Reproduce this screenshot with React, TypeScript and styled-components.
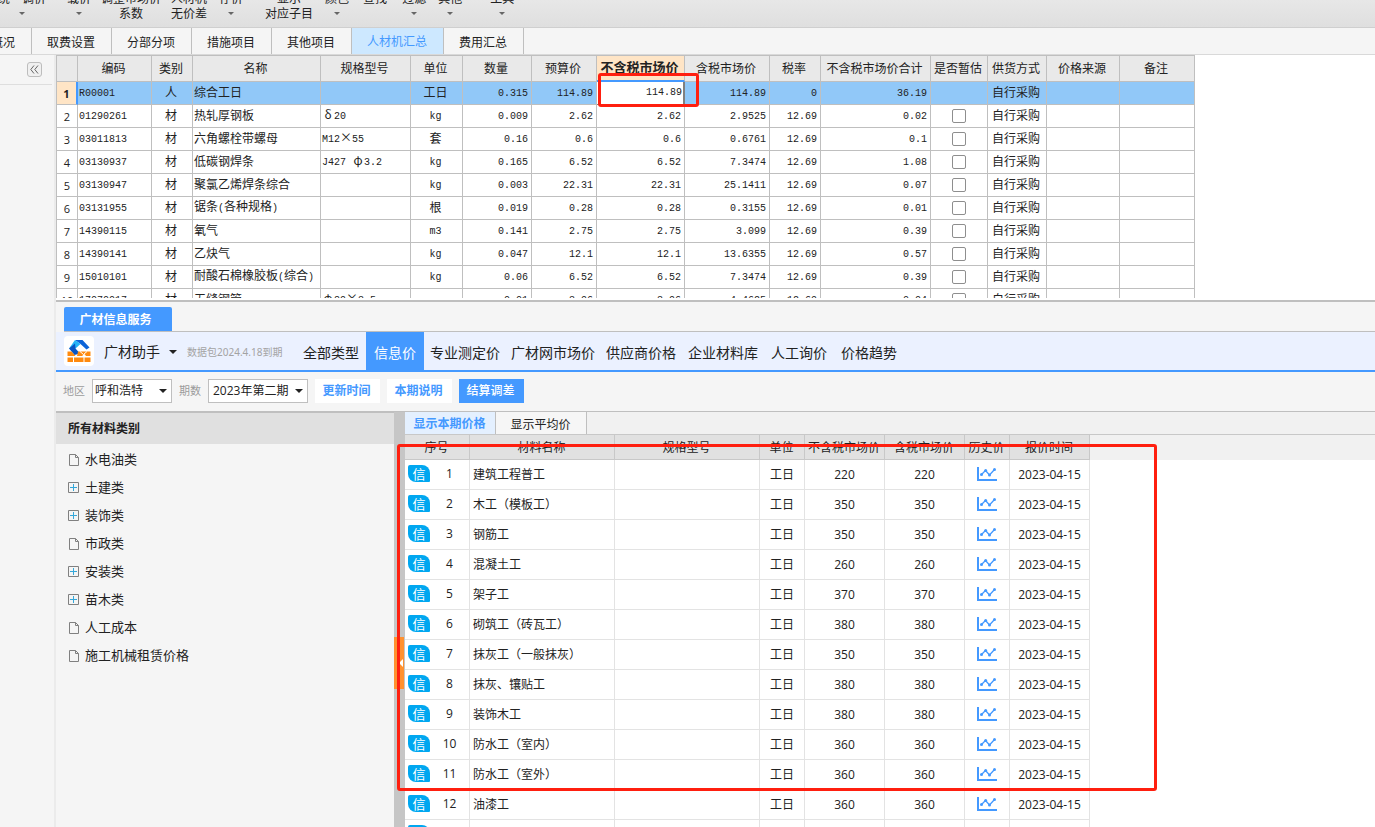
import React from 'react';
import styled, { createGlobalStyle, css } from 'styled-components';

const blue = '#4499ff';
const line = '#bfbfbf';
const sans = '"Open Sans", "Noto Sans CJK SC", sans-serif';

const GlobalStyle = createGlobalStyle`
  *, *::before, *::after { box-sizing: border-box; }
  body { margin: 0; background: #fff; color: #222; font: 12px/16px ${sans}; overflow: hidden; }
  button, input, select { font: inherit; color: inherit; }
  button { border: 0; padding: 0; background: none; cursor: pointer; white-space: nowrap; }
`;

const Page = styled.div`
  display: flex;
  flex-direction: column;
  height: 100vh;
  overflow: hidden;
`;

/* ---------- ribbon ---------- */
const Ribbon = styled.header`
  display: flex;
  align-items: flex-start;
  flex: none;
  height: 28px;
  overflow: hidden;
  background: linear-gradient(#e7e7e7, #dfdfdf);
  border-bottom: 1px solid #cfcfcf;
`;
const RibbonButton = styled.button<{ $gap: number }>`
  display: flex;
  flex: none;
  flex-direction: column;
  align-items: center;
  margin: -8px 0 0 ${p => p.$gap}px;
  line-height: 14px;
`;
const RibbonSub = styled.span`
  display: flex;
  align-items: center;
  justify-content: center;
  height: 15px;
`;
const Caret = styled.span<{ $size?: number; $color?: string }>`
  display: block;
  flex: none;
  border: ${p => p.$size ?? 3}px solid transparent;
  border-top-color: ${p => p.$color ?? '#666'};
  border-bottom: 0;
`;

/* ---------- page tabs ---------- */
const PageTabs = styled.nav`
  display: flex;
  flex: none;
  height: 27px;
  background: #f5f5f5;
  border-bottom: 1px solid #d9d9d9;
`;
const PageTab = styled.button<{ $active?: boolean; $width?: number; $cut?: boolean }>`
  display: flex;
  flex: none;
  align-items: center;
  justify-content: center;
  width: ${p => p.$width ?? 80}px;
  padding: 4px 1px 0 0;
  border-right: 1px solid ${line};
  ${p => p.$active && css`background: #cde8ff; color: ${blue}; padding-top: 2px;`}
  ${p => p.$cut && css`justify-content: flex-end; padding-right: 16px;`}
`;

const Main = styled.div`
  display: flex;
  flex: 1;
  min-height: 0;
`;
const Rail = styled.aside`
  flex: none;
  width: 56px;
  background: #f5f5f5;
  border-right: 2px solid #ebebeb;
`;
const RailHead = styled.div`
  display: flex;
  justify-content: flex-end;
  height: 30px;
  margin-right: 2px;
  padding: 7px 10px 0 0;
  border-bottom: 1px solid #dedede;
`;
const CollapseButton = styled.button`
  display: flex;
  align-items: center;
  justify-content: center;
  width: 15px;
  height: 15px;
  border: 1px solid #bdbdbd;
  border-radius: 3px;
  background: #f0f0f0;
`;
const Work = styled.main`
  display: flex;
  flex: 1;
  flex-direction: column;
  min-width: 0;
`;

/* ---------- summary grid ---------- */
const SummaryPane = styled.section`
  position: relative;
  flex: none;
  height: 247px;
  padding-bottom: 2px;
  border-bottom: 2px solid ${line};
  background: #fff;
`;
const SummaryScroll = styled.div`
  height: 243px;
  overflow: hidden;
`;
const SummaryTable = styled.table`
  width: 1139px;
  table-layout: fixed;
  border-collapse: separate;
  border-spacing: 0;
  border-top: 1px solid ${line};
  border-left: 1px solid ${line};
  font-family: "Noto Sans CJK SC", sans-serif;
`;
const HeadCell = styled.th<{ $active?: boolean }>`
  height: 26px;
  padding: 0 2px 2px 0;
  background: ${p => (p.$active ? '#ffe5c6' : '#e9e9e9')};
  border-right: 1px solid ${line};
  border-bottom: ${p => (p.$active ? `2px solid ${blue}` : `1px solid ${line}`)};
  font-weight: ${p => (p.$active ? 700 : 400)};
  font-size: ${p => (p.$active ? 13 : 12)}px;
  white-space: nowrap;
`;
type Align = 'left' | 'center' | 'right';
const Cell = styled.td<{ $align?: Align }>`
  height: 23px;
  padding: 0 3px 2px 1px;
  border-right: 1px solid ${line};
  border-bottom: 1px solid ${line};
  text-align: ${p => p.$align ?? 'center'};
  white-space: nowrap;
`;
const TickCell = styled(Cell)`
  padding: 0 1px;
`;
const RowNumber = styled.th<{ $active?: boolean }>`
  height: 23px;
  padding: 1px 0 0;
  border-right: 1px solid ${line};
  border-bottom: 1px solid ${line};
  font: 400 11px/16px ${sans};
  ${p => p.$active && css`background: #ffe5c6; border-right: 2px solid ${blue}; font-weight: 700;`}
`;
const SummaryRow = styled.tr<{ $active?: boolean }>`
  background: ${p => (p.$active ? '#91c8f8' : '#fff')};
`;
const EditCell = styled(Cell)`
  padding: 0;
  background: #fff;
  border-right: 2px solid #808080;
  border-bottom-color: #808080;
`;
const CellInput = styled.input`
  display: block;
  width: 100%;
  height: 22px;
  padding: 0 1px 2px 0;
  border: 0;
  outline: 0;
  background: transparent;
  text-align: right;
  font: 10px/16px "Liberation Mono", monospace;
`;
const Mono = styled.span`
  font: 10px/16px "Liberation Mono", monospace;
  white-space: pre;
`;
const Wide = styled.span`
  display: inline-block;
  width: 12px;
  text-align: center;
`;
const Tick = styled.input`
  display: block;
  width: 14px;
  height: 14px;
  margin: 0 auto;
  appearance: none;
  border: 1px solid #8e8e8e;
  border-radius: 2px;
  background: #fff;
`;
const Mark = styled.div<{ $x: number; $y: number; $w: number; $h: number }>`
  position: absolute;
  left: ${p => p.$x}px;
  top: ${p => p.$y}px;
  width: ${p => p.$w}px;
  height: ${p => p.$h}px;
  border: 3px solid #ff1f0f;
  border-radius: 3px;
  pointer-events: none;
`;

/* ---------- price service ---------- */
const Service = styled.section`
  display: flex;
  flex: 1;
  flex-direction: column;
  min-height: 0;
  background: #f5f5f5;
`;
const ServiceTabs = styled.div`
  display: flex;
  flex: none;
  align-items: flex-end;
  height: 30px;
  margin-left: 8px;
  border-bottom: 1px solid ${line};
`;
const ServiceTab = styled.button`
  width: 108px;
  height: 24px;
  padding: 2px 5px 0 0;
  border-radius: 2px 2px 0 0;
  background: ${blue};
  color: #fff;
  font-weight: 700;
`;
const MenuBar = styled.div`
  display: flex;
  flex: none;
  align-items: center;
  height: 40px;
  padding-left: 8px;
  background: #ebf1ff;
  border-bottom: 2px solid ${blue};
  font-size: 14px;
  line-height: 20px;
`;
const LogoBox = styled.div`
  width: 30px;
  height: 30px;
  border-radius: 4px;
  background: #fff;
  & > svg { display: block; }
`;
const Brand = styled.button`
  display: flex;
  align-items: center;
  gap: 9px;
  margin-left: 10px;
  padding-top: 2px;
`;
const Expiry = styled.span`
  width: 98px;
  margin: 0 18px 0 10px;
  padding-top: 1px;
  color: #a3a3a3;
  font: 10px/16px "Noto Sans", "Noto Sans CJK SC", sans-serif;
  white-space: nowrap;
`;
const MenuItem = styled.button<{ $gap: number; $active?: boolean }>`
  align-self: stretch;
  margin-left: ${p => p.$gap}px;
  padding-top: 4px;
  ${p => p.$active && css`padding: 4px 8px 0; background: ${blue}; color: #fff;`}
`;
const Filters = styled.div`
  display: flex;
  flex: none;
  align-items: center;
  gap: 7px;
  height: 39px;
  padding: 0 0 2px 7px;
`;
const FilterLabel = styled.label`
  display: flex;
  align-items: center;
  gap: 7px;
  color: #9b9b9b;
  font-size: 11px;
`;
const SelectBox = styled.span<{ $width: number }>`
  display: grid;
  align-items: center;
  width: ${p => p.$width}px;
  color: #222;
  font-size: 12px;
  & > * { grid-area: 1 / 1; }
  & > span { justify-self: end; margin-right: 5px; pointer-events: none; }
`;
const Select = styled.select<{ $pad: number }>`
  width: 100%;
  height: 24px;
  padding: 0 0 0 ${p => p.$pad}px;
  appearance: none;
  border: 1px solid ${line};
  border-radius: 0;
  background: #fff;
`;
const Action = styled.button<{ $primary?: boolean }>`
  width: 65px;
  height: 24px;
  padding: 1px 2px 0 0;
  background: ${p => (p.$primary ? blue : '#fff')};
  color: ${p => (p.$primary ? '#fff' : blue)};
  font-weight: ${p => (p.$primary ? 500 : 700)};
`;
const Body = styled.div`
  position: relative;
  display: flex;
  flex: 1;
  min-height: 0;
  border-top: 1px solid ${line};
`;
const Sidebar = styled.aside`
  flex: none;
  width: 338px;
  border-top: 1px solid ${line};
`;
const SidebarTitle = styled.h2`
  margin: 0 0 1px;
  padding: 8px 12px 7px;
  background: #e0e0e0;
  font-size: 12px;
  line-height: 16px;
`;
const Tree = styled.ul`
  margin: 0;
  padding: 0;
  list-style: none;
`;
const TreeItem = styled.button`
  display: flex;
  align-items: center;
  gap: 5px;
  width: 100%;
  height: 28px;
  padding-left: 12px;
  font-size: 13px;
  & > svg { display: block; margin-top: 2px; }
`;
const Splitter = styled.div`
  flex: none;
  width: 11px;
  padding-top: 225px;
  background: #c6c6c6;
`;
const Handle = styled.button`
  display: flex;
  align-items: center;
  justify-content: flex-end;
  width: 10px;
  height: 52px;
  background: #ff912f;
`;
const Results = styled.div`
  flex: 1;
  min-width: 0;
  overflow: hidden;
  background: #fff;
`;
const SubTabs = styled.div`
  display: flex;
  height: 23px;
  background: #f1f1f1;
  border-bottom: 1px solid #c8c8c8;
`;
const SubTab = styled.button<{ $active?: boolean }>`
  width: 91px;
  padding-top: 4px;
  padding-right: 1px;
  border-right: 1px solid ${line};
  background: ${p => (p.$active ? '#e4f0ff' : '#f6f6f6')};
  ${p => p.$active && css`padding-top: 2px; color: ${blue}; font-weight: 700;`}
`;
const PriceWrap = styled.div`
  background: linear-gradient(#f1f1f1 25px, #fff 25px);
`;
const PriceTable = styled.table`
  width: 685px;
  table-layout: fixed;
  border-collapse: separate;
  border-spacing: 0;
`;
const PriceHead = styled.th`
  height: 25px;
  padding: 2px 1px 0 0;
  background: #e1e1e1;
  border-right: 1px solid #c8c8c8;
  border-bottom: 1px solid #c8c8c8;
  font-weight: 400;
  white-space: nowrap;
`;
const PriceCell = styled.td<{ $align?: Align }>`
  height: 30px;
  padding: 0 3px;
  border-right: 1px solid #e3e3e3;
  border-bottom: 1px solid #e3e3e3;
  text-align: ${p => p.$align ?? 'center'};
  white-space: nowrap;
`;
const IndexBox = styled.div`
  display: flex;
  align-items: center;
  padding-bottom: 2px;
`;
const IndexText = styled.span`
  flex: 1;
  padding-left: 3px;
`;
const Badge = styled.span`
  flex: none;
  width: 22px;
  height: 17px;
  border-radius: 2px 8px 1px 8px;
  background: #00a7f0;
  color: #fff;
  font-size: 13px;
  line-height: 18px;
`;
const IconButton = styled.button`
  display: block;
  margin: 0 auto;
  padding-bottom: 2px;
  & > svg { display: block; }
`;

/* ---------- drawings ---------- */
const Logo = () => (
  <svg width="30" height="30" viewBox="0 0 30 30" aria-hidden="true">
    <path d="M11 4H18.5L25.5 11.5 22.5 13.5 16.5 8Z" fill="#0c63d8" />
    <path d="M11 4 16.5 8 11.5 12.5 5 12.5Z" fill="#25b4f7" />
    <path d="M5 12.5 11 7.5 11.5 12.5 16 17.5 10.5 19Z" fill="#0a55c4" />
    <path d="M3.5 15.5H7.5L11.5 20H3.5Z" fill="#ff8a0f" />
    <path d="M14 15.5H26.5V20H22L20.5 18 18 20H13Z" fill="#ff8a0f" />
    <path d="M16 15.5 19.5 18.5 23 15.5" fill="none" stroke="#fff" strokeWidth="1" />
    <path d="M3.5 21.5H9V26H3.5ZM10 21.5H19.5V26H10ZM20.5 21.5H26.5V26H20.5Z" fill="#ff8a0f" />
  </svg>
);
const FileIcon = () => (
  <svg width="12" height="12" viewBox="0 0 12 12" fill="none" stroke="#808080" aria-hidden="true">
    <path d="M1.5.5H7.5L10.5 3.5V11.5H1.5Z M7.5.5V3.5H10.5" />
  </svg>
);
const PlusIcon = () => (
  <svg width="12" height="12" viewBox="0 0 12 12" fill="none" aria-hidden="true">
    <path d="M.5.5H10.5V10.5H.5Z" stroke="#808080" />
    <path d="M2 5.5H9M5.5 2V9" stroke="#35a7d9" />
  </svg>
);
const TrendIcon = () => (
  <svg width="20" height="14" viewBox="0 0 20 14" aria-hidden="true">
    <path d="M1 0V13H20" fill="none" stroke={blue} strokeWidth="2" />
    <path d="M4.5 7.5 8.5 3.5 12.5 8 17.5 2.5" fill="none" stroke={blue} strokeWidth="1.3" />
    <g fill={blue}>
      <circle cx="4.5" cy="7.5" r="1.5" />
      <circle cx="8.7" cy="3.5" r="1.5" />
      <circle cx="12.5" cy="8" r="1.5" />
      <circle cx="17.5" cy="2.5" r="1.5" />
    </g>
  </svg>
);

/* Half-width characters take 6px each, Han and symbols 12px. */
const Mixed = ({ text }: { text: string }) => (
  <>
    {text.split(/([\x20-\x7e]+|[δφ×])/).filter(Boolean).map((part, i) =>
      /^[δφ×]$/.test(part) ? <Wide key={i}>{part}</Wide>
        : /^[\x20-\x7e]/.test(part) ? <Mono key={i}>{part}</Mono>
        : <React.Fragment key={i}>{part}</React.Fragment>
    )}
  </>
);

/* ---------- data ---------- */
const ribbon: [string, string | null, number][] = [
  ['统一调价', null, -2], ['载价', null, 21], ['调整市场价', '系数', 10], ['人材机', '无价差', 10],
  ['存价', null, 12], ['显示', '对应子目', 22], ['颜色', null, 12], ['查找', '', 14],
  ['过滤', null, 15], ['其他', null, 12], ['工具', null, 28],
];
const pageTabs = ['取费设置', '分部分项', '措施项目', '其他项目', '人材机汇总', '费用汇总'];
const summaryCols: [string, number, Align][] = [
  ['编码', 74, 'left'], ['类别', 41, 'center'], ['名称', 128, 'left'], ['规格型号', 90, 'left'],
  ['单位', 52, 'center'], ['数量', 69, 'right'], ['预算价', 65, 'right'], ['不含税市场价', 88, 'right'],
  ['含税市场价', 85, 'right'], ['税率', 51, 'right'], ['不含税市场价合计', 110, 'right'],
  ['是否暂估', 57, 'center'], ['供货方式', 59, 'center'], ['价格来源', 73, 'left'], ['备注', 75, 'left'],
];
const summary = [
  ['R00001', '人', '综合工日', '', '工日', '0.315', '114.89', '114.89', '114.89', '0', '36.19'],
  ['01290261', '材', '热轧厚钢板', 'δ20', 'kg', '0.009', '2.62', '2.62', '2.9525', '12.69', '0.02'],
  ['03011813', '材', '六角螺栓带螺母', 'M12×55', '套', '0.16', '0.6', '0.6', '0.6761', '12.69', '0.1'],
  ['03130937', '材', '低碳钢焊条', 'J427 φ3.2', 'kg', '0.165', '6.52', '6.52', '7.3474', '12.69', '1.08'],
  ['03130947', '材', '聚氯乙烯焊条综合', '', 'kg', '0.003', '22.31', '22.31', '25.1411', '12.69', '0.07'],
  ['03131955', '材', '锯条(各种规格)', '', '根', '0.019', '0.28', '0.28', '0.3155', '12.69', '0.01'],
  ['14390115', '材', '氧气', '', 'm3', '0.141', '2.75', '2.75', '3.099', '12.69', '0.39'],
  ['14390141', '材', '乙炔气', '', 'kg', '0.047', '12.1', '12.1', '13.6355', '12.69', '0.57'],
  ['15010101', '材', '耐酸石棉橡胶板(综合)', '', 'kg', '0.06', '6.52', '6.52', '7.3474', '12.69', '0.39'],
  ['17070017', '材', '无缝钢管', 'φ89×3.5', '', '0.01', '3.96', '3.96', '4.4625', '12.69', '0.04'],
];
const menu: [string, number][] = [
  ['全部类型', 0], ['信息价', 7], ['专业测定价', 6], ['广材网市场价', 11],
  ['供应商价格', 11], ['企业材料库', 12], ['人工询价', 13], ['价格趋势', 14],
];
const tree: [string, boolean][] = [
  ['水电油类', false], ['土建类', true], ['装饰类', true], ['市政类', false],
  ['安装类', true], ['苗木类', true], ['人工成本', false], ['施工机械租赁价格', false],
];
const priceCols: [string, number][] = [
  ['序号', 65], ['材料名称', 145], ['规格型号', 145], ['单位', 45],
  ['不含税市场价', 80], ['含税市场价', 80], ['历史价', 45], ['报价时间', 80],
];
const prices: [string, number][] = [
  ['建筑工程普工', 220], ['木工（模板工）', 350], ['钢筋工', 350], ['混凝土工', 260],
  ['架子工', 370], ['砌筑工（砖瓦工）', 380], ['抹灰工（一般抹灰）', 350], ['抹灰、镶贴工', 380],
  ['装饰木工', 380], ['防水工（室内）', 360], ['防水工（室外）', 360], ['油漆工', 360], ['电工', 360],
];

export default function App() {
  return (
    <Page>
      <GlobalStyle />
      <Ribbon>
        {ribbon.map(([top, sub, gap]) => (
          <RibbonButton key={top} $gap={gap}>
            <span>{top}</span>
            <RibbonSub>{sub === null ? <Caret /> : sub}</RibbonSub>
          </RibbonButton>
        ))}
      </Ribbon>
      <PageTabs>
        <PageTab $width={32} $cut>概况</PageTab>
        {pageTabs.map(t => (
          <PageTab key={t} $active={t === '人材机汇总'} $width={t === '人材机汇总' ? 92 : 80}>{t}</PageTab>
        ))}
      </PageTabs>
      <Main>
        <Rail>
          <RailHead>
            <CollapseButton aria-label="收起">
              <svg width="9" height="9" viewBox="0 0 9 9" fill="none" stroke="#666">
                <path d="M4 .5 .8 4.5 4 8.5M8 .5 4.8 4.5 8 8.5" />
              </svg>
            </CollapseButton>
          </RailHead>
        </Rail>
        <Work>
          <SummaryPane>
            <SummaryScroll>
              <SummaryTable>
                <colgroup>
                  <col width={21} />
                  {summaryCols.map(([t, w]) => <col key={t} width={w} />)}
                </colgroup>
                <thead>
                  <tr>
                    <HeadCell />
                    {summaryCols.map(([t]) => <HeadCell key={t} $active={t === '不含税市场价'}>{t}</HeadCell>)}
                  </tr>
                </thead>
                <tbody>
                  {summary.map((row, r) => (
                    <SummaryRow key={row[0]} $active={r === 0}>
                      <RowNumber $active={r === 0}>{r + 1}</RowNumber>
                      {row.map((v, c) => r === 0 && c === 7 ? (
                        <EditCell key={c}><CellInput aria-label="不含税市场价" defaultValue={v} /></EditCell>
                      ) : (
                        <Cell key={c} $align={summaryCols[c][2]}><Mixed text={v} /></Cell>
                      ))}
                      <TickCell>{r > 0 && <Tick type="checkbox" aria-label={`${row[2]} 是否暂估`} />}</TickCell>
                      <Cell>自行采购</Cell>
                      <Cell />
                      <Cell />
                    </SummaryRow>
                  ))}
                </tbody>
              </SummaryTable>
            </SummaryScroll>
            <Mark $x={542} $y={18} $w={101} $h={34} />
          </SummaryPane>

          <Service>
            <ServiceTabs><ServiceTab>广材信息服务</ServiceTab></ServiceTabs>
            <MenuBar>
              <LogoBox><Logo /></LogoBox>
              <Brand>广材助手<Caret $size={4} $color="#222" /></Brand>
              <Expiry>数据包2024.4.18到期</Expiry>
              {menu.map(([t, gap]) => (
                <MenuItem key={t} $gap={gap} $active={t === '信息价'}>{t}</MenuItem>
              ))}
            </MenuBar>
            <Filters>
              <FilterLabel>
                地区
                <SelectBox $width={80}>
                  <Select $pad={2}><option>呼和浩特</option></Select>
                  <Caret $size={4} $color="#222" />
                </SelectBox>
              </FilterLabel>
              <FilterLabel>
                期数
                <SelectBox $width={100}>
                  <Select $pad={4}><option>2023年第二期</option></Select>
                  <Caret $size={4} $color="#222" />
                </SelectBox>
              </FilterLabel>
              <Action>更新时间</Action>
              <Action>本期说明</Action>
              <Action $primary>结算调差</Action>
            </Filters>
            <Body>
              <Sidebar>
                <SidebarTitle>所有材料类别</SidebarTitle>
                <Tree>
                  {tree.map(([t, open]) => (
                    <li key={t}><TreeItem>{open ? <PlusIcon /> : <FileIcon />}{t}</TreeItem></li>
                  ))}
                </Tree>
              </Sidebar>
              <Splitter>
                <Handle aria-label="收起侧栏">
                  <svg width="5" height="10" viewBox="0 0 5 10" fill="#fff"><path d="M4 1V9L0 5Z" /></svg>
                </Handle>
              </Splitter>
              <Results>
                <SubTabs>
                  <SubTab $active>显示本期价格</SubTab>
                  <SubTab>显示平均价</SubTab>
                </SubTabs>
                <PriceWrap>
                  <PriceTable>
                    <colgroup>{priceCols.map(([t, w]) => <col key={t} width={w} />)}</colgroup>
                    <thead><tr>{priceCols.map(([t]) => <PriceHead key={t}>{t}</PriceHead>)}</tr></thead>
                    <tbody>
                      {prices.map(([name, price], i) => (
                        <tr key={name}>
                          <PriceCell>
                            <IndexBox><Badge>信</Badge><IndexText>{i + 1}</IndexText></IndexBox>
                          </PriceCell>
                          <PriceCell $align="left">{name}</PriceCell>
                          <PriceCell />
                          <PriceCell>工日</PriceCell>
                          <PriceCell>{price}</PriceCell>
                          <PriceCell>{price}</PriceCell>
                          <PriceCell><IconButton aria-label="历史价"><TrendIcon /></IconButton></PriceCell>
                          <PriceCell>2023-04-15</PriceCell>
                        </tr>
                      ))}
                    </tbody>
                  </PriceTable>
                </PriceWrap>
              </Results>
              <Mark $x={341} $y={32} $w={760} $h={347} />
            </Body>
          </Service>
        </Work>
      </Main>
    </Page>
  );
}
